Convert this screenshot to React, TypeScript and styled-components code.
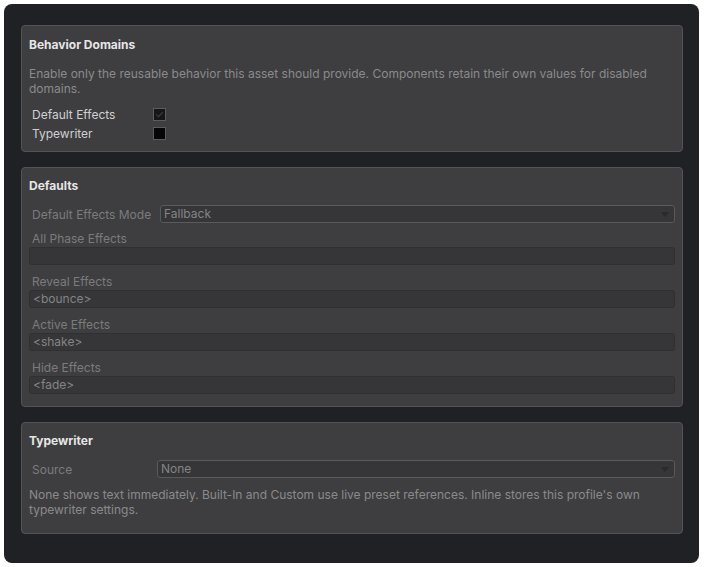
import styled, { createGlobalStyle } from 'styled-components';

const GlobalStyle = createGlobalStyle`
  html, body {
    margin: 0;
    padding: 0;
    background: #ffffff;
  }
  body {
    font-family: Inter, "Noto Sans", sans-serif;
    font-size: 12px;
  }
`

const Frame = styled.div`
  margin: 4px;
  width: 695px;
  height: 559px;
  box-sizing: border-box;
  background: #202125;
  border-radius: 8px;
  padding: 21px 16px 0 17px;
  display: flex;
  flex-direction: column;
  gap: 15px;
`

const Panel = styled.section<{ $bottom?: number }>`
  background: #3e3e40;
  border: 1px solid #545457;
  border-radius: 4px;
  padding: 10px 7px ${p => p.$bottom ?? 8}px 7px;
  display: flex;
  flex-direction: column;
`

const Title = styled.h3<{ $top?: number }>`
  margin: ${p => p.$top ?? 0}px 0 0;
  height: 16px;
  line-height: 16px;
  font-size: 12px;
  font-weight: 700;
  color: #e6e6e6;
`

const Help = styled.p<{ $top?: number }>`
  margin: ${p => p.$top ?? 14}px 0 0;
  font-size: 12px;
  line-height: 15px;
  color: #8a8a8c;
`

const CheckRow = styled.label<{ $top?: number }>`
  display: flex;
  align-items: center;
  height: 19px;
  margin-top: ${p => p.$top ?? 0}px;
  padding-left: 3px;
  color: #d0d0d2;
  line-height: 19px;
`

const RowLabel = styled.span<{ $width: number; $dim?: boolean }>`
  width: ${p => p.$width}px;
  flex: none;
  color: ${p => (p.$dim ? '#7b7b7d' : '#d0d0d2')};
`

const Box = styled.span<{ $checked?: boolean }>`
  width: 11px;
  height: 11px;
  border: 1px solid #5c5c5e;
  background: ${p => (p.$checked ? '#161617' : '#060606')};
  display: flex;
  align-items: center;
  justify-content: center;
`

const SelectRow = styled.div<{ $top: number }>`
  display: flex;
  align-items: center;
  margin-top: ${p => p.$top}px;
  padding-left: 3px;
  height: 18px;
`

const Select = styled.div`
  flex: 1;
  height: 18px;
  box-sizing: border-box;
  border: 1px solid #5a5a5c;
  border-radius: 3px;
  background: #363638;
  color: #848486;
  padding-left: 3px;
  display: flex;
  align-items: center;
  justify-content: space-between;
  line-height: 16px;
`

const Arrow = styled.span`
  width: 0;
  height: 0;
  border-left: 4px solid transparent;
  border-right: 4px solid transparent;
  border-top: 5px solid #2a2a2c;
  margin-right: 5px;
`

const FieldList = styled.div`
  margin-top: 8px;
  display: flex;
  flex-direction: column;
  gap: 9px;
`

const Field = styled.div`
  display: flex;
  flex-direction: column;
`

const FieldLabel = styled.div`
  padding-left: 3px;
  height: 16px;
  line-height: 16px;
  color: #7b7b7d;
`

const Input = styled.div`
  height: 18px;
  box-sizing: border-box;
  border: 1px solid #303032;
  border-radius: 3px;
  background: #363638;
  color: #848486;
  padding-left: 3px;
  line-height: 16px;
`

const Check = () => (
  <svg width="9" height="9" viewBox="0 0 10 10">
    <path d="M1.5 5.2 L4 7.5 L8.5 2.5" fill="none" stroke="#3c3c3e" strokeWidth="1.3" />
  </svg>
)

const effects = [
  { label: 'All Phase Effects', value: '' },
  { label: 'Reveal Effects', value: '<bounce>' },
  { label: 'Active Effects', value: '<shake>' },
  { label: 'Hide Effects', value: '<fade>' },
]

export default function App() {
  return (
    <>
      <GlobalStyle />
      <Frame>
        <Panel>
          <Title $top={1}>Behavior Domains</Title>
          <Help $top={13}>
            Enable only the reusable behavior this asset should provide. Components retain their own values for disabled
            domains.
          </Help>
          <CheckRow $top={9}>
            <RowLabel $width={121}>Default Effects</RowLabel>
            <Box $checked><Check /></Box>
          </CheckRow>
          <CheckRow>
            <RowLabel $width={121}>Typewriter</RowLabel>
            <Box />
          </CheckRow>
        </Panel>

        <Panel $bottom={12}>
          <Title>Defaults</Title>
          <SelectRow $top={11}>
            <RowLabel $width={128} $dim>Default Effects Mode</RowLabel>
            <Select>Fallback<Arrow /></Select>
          </SelectRow>
          <FieldList>
            {effects.map(e => (
              <Field key={e.label}>
                <FieldLabel>{e.label}</FieldLabel>
                <Input>{e.value}</Input>
              </Field>
            ))}
          </FieldList>
        </Panel>

        <Panel $bottom={16}>
          <Title>Typewriter</Title>
          <SelectRow $top={11}>
            <RowLabel $width={125} $dim>Source</RowLabel>
            <Select>None<Arrow /></Select>
          </SelectRow>
          <Help $top={9}>
            None shows text immediately. Built-In and Custom use live preset references. Inline stores this profile's own
            typewriter settings.
          </Help>
        </Panel>
      </Frame>
    </>
  )
}
